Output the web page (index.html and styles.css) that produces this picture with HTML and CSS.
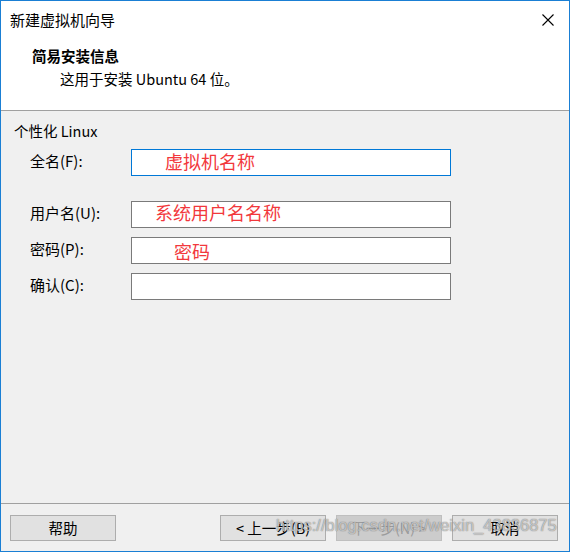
FILE: index.html
```html
<!DOCTYPE html>
<html lang="zh-CN">
<head>
<meta charset="utf-8">
<title>新建虚拟机向导</title>
<link rel="stylesheet" href="styles.css">
</head>
<body>
<div class="window">
  <div class="header">
    <div class="titlebar">
      <span class="title">新建虚拟机向导</span>
      <span class="close" aria-label="关闭">
        <svg width="12" height="12" viewBox="0 0 12 12"><path d="M0.5 0.5 L11.5 11.5 M11.5 0.5 L0.5 11.5" stroke="#000" stroke-width="1.1" fill="none"/></svg>
      </span>
    </div>
    <div class="head-info">
      <div class="head-title">简易安装信息</div>
      <div class="head-sub">这用于安装 Ubuntu 64 位。</div>
    </div>
  </div>
  <div class="content">
    <div class="group-label">个性化 Linux</div>
    <div class="form">
      <div class="row">
        <span class="label">全名(F):</span>
        <div class="field focused"><span class="hint hint-1">虚拟机名称</span></div>
      </div>
      <div class="row row-user">
        <span class="label">用户名(U):</span>
        <div class="field"><span class="hint hint-2">系统用户名名称</span></div>
      </div>
      <div class="row">
        <span class="label">密码(P):</span>
        <div class="field"><span class="hint hint-3">密码</span></div>
      </div>
      <div class="row">
        <span class="label">确认(C):</span>
        <div class="field"></div>
      </div>
    </div>
  </div>
  <div class="footer">
    <button class="btn">帮助</button>
    <div class="spacer"></div>
    <button class="btn">&lt; 上一步(B)</button>
    <button class="btn disabled">下一步(N) &gt;</button>
    <button class="btn">取消</button>
    <div class="watermark">https://blog.csdn.net/weixin_43836875</div>
  </div>
</div>
</body>
</html>
```
FILE: styles.css
```css
* { box-sizing: border-box; }
html, body { margin: 0; padding: 0; }
body {
  width: 570px;
  height: 552px;
  font-family: "Noto Sans CJK SC", "Noto Sans", sans-serif;
  font-size: 15px;
  color: #000;
}
.window {
  width: 570px;
  height: 552px;
  border: 1px solid #1a7fd4;
  display: flex;
  flex-direction: column;
  background: #f0f0f0;
}
.header {
  background: #fff;
  height: 110px;
  border-bottom: 1px solid #a0a0a0;
  flex: none;
}
.titlebar {
  height: 37px;
  display: flex;
  align-items: center;
  justify-content: space-between;
  padding-left: 9px;
  padding-right: 15px;
}
.title { font-size: 15px; line-height: 20px; }
.close { display: flex; width: 12px; height: 12px; }
.head-info { padding-top: 8px; }
.head-title {
  font-weight: bold;
  font-size: 14.5px;
  line-height: 20px;
  padding-left: 31px;
}
.head-sub {
  padding-left: 59px;
  line-height: 20px;
  margin-top: 3px;
  font-size: 14.5px;
}
.content {
  flex: 1;
  padding-top: 10px;
}
.group-label {
  padding-left: 13px;
  line-height: 20px;
  font-size: 14.5px;
}
.form {
  padding-top: 8px;
  display: flex;
  flex-direction: column;
  gap: 9px;
}
.row {
  display: flex;
  align-items: center;
  height: 27px;
}
.row-user { margin-top: 16px; }
.label {
  width: 130px;
  padding-left: 29px;
  font-size: 15px;
  line-height: 20px;
  margin-top: -4px;
}
.field {
  width: 320px;
  height: 27px;
  background: #fff;
  border: 1px solid #7a7a7a;
  position: relative;
}
.field.focused { border-color: #0078d7; }
.hint {
  position: absolute;
  top: 0;
  color: #f2383c;
  font-size: 18px;
  line-height: 22px;
}
.hint-1 { left: 33px; }
.hint-2 { left: 23px; top: -1px; }
.hint-3 { left: 42px; top: 2px; }
.footer {
  flex: none;
  height: 48px;
  border-top: 1px solid #a0a0a0;
  display: flex;
  align-items: flex-start;
  padding: 11px 11px 0 9px;
  gap: 10px;
  position: relative;
}
.spacer { flex: 1; }
.btn {
  width: 106px;
  height: 26px;
  background: #e1e1e1;
  border: 1px solid #adadad;
  font-family: "Noto Sans CJK SC", "Noto Sans", sans-serif;
  font-size: 14.5px;
  color: #000;
  padding: 0;
  line-height: 22px;
}
.btn.disabled {
  background: #cccccc;
  border-color: #bfbfbf;
  color: #9c9c9c;
}
.watermark {
  position: absolute;
  left: 275px;
  top: 12px;
  font-family: "Liberation Sans", Arial, sans-serif;
  font-size: 16.5px;
  color: rgba(255, 255, 255, 0.55);
  text-shadow: 0 0 1px rgba(90, 90, 90, 0.6), 0 0 1px rgba(90, 90, 90, 0.6);
  white-space: nowrap;
  pointer-events: none;
}
```
